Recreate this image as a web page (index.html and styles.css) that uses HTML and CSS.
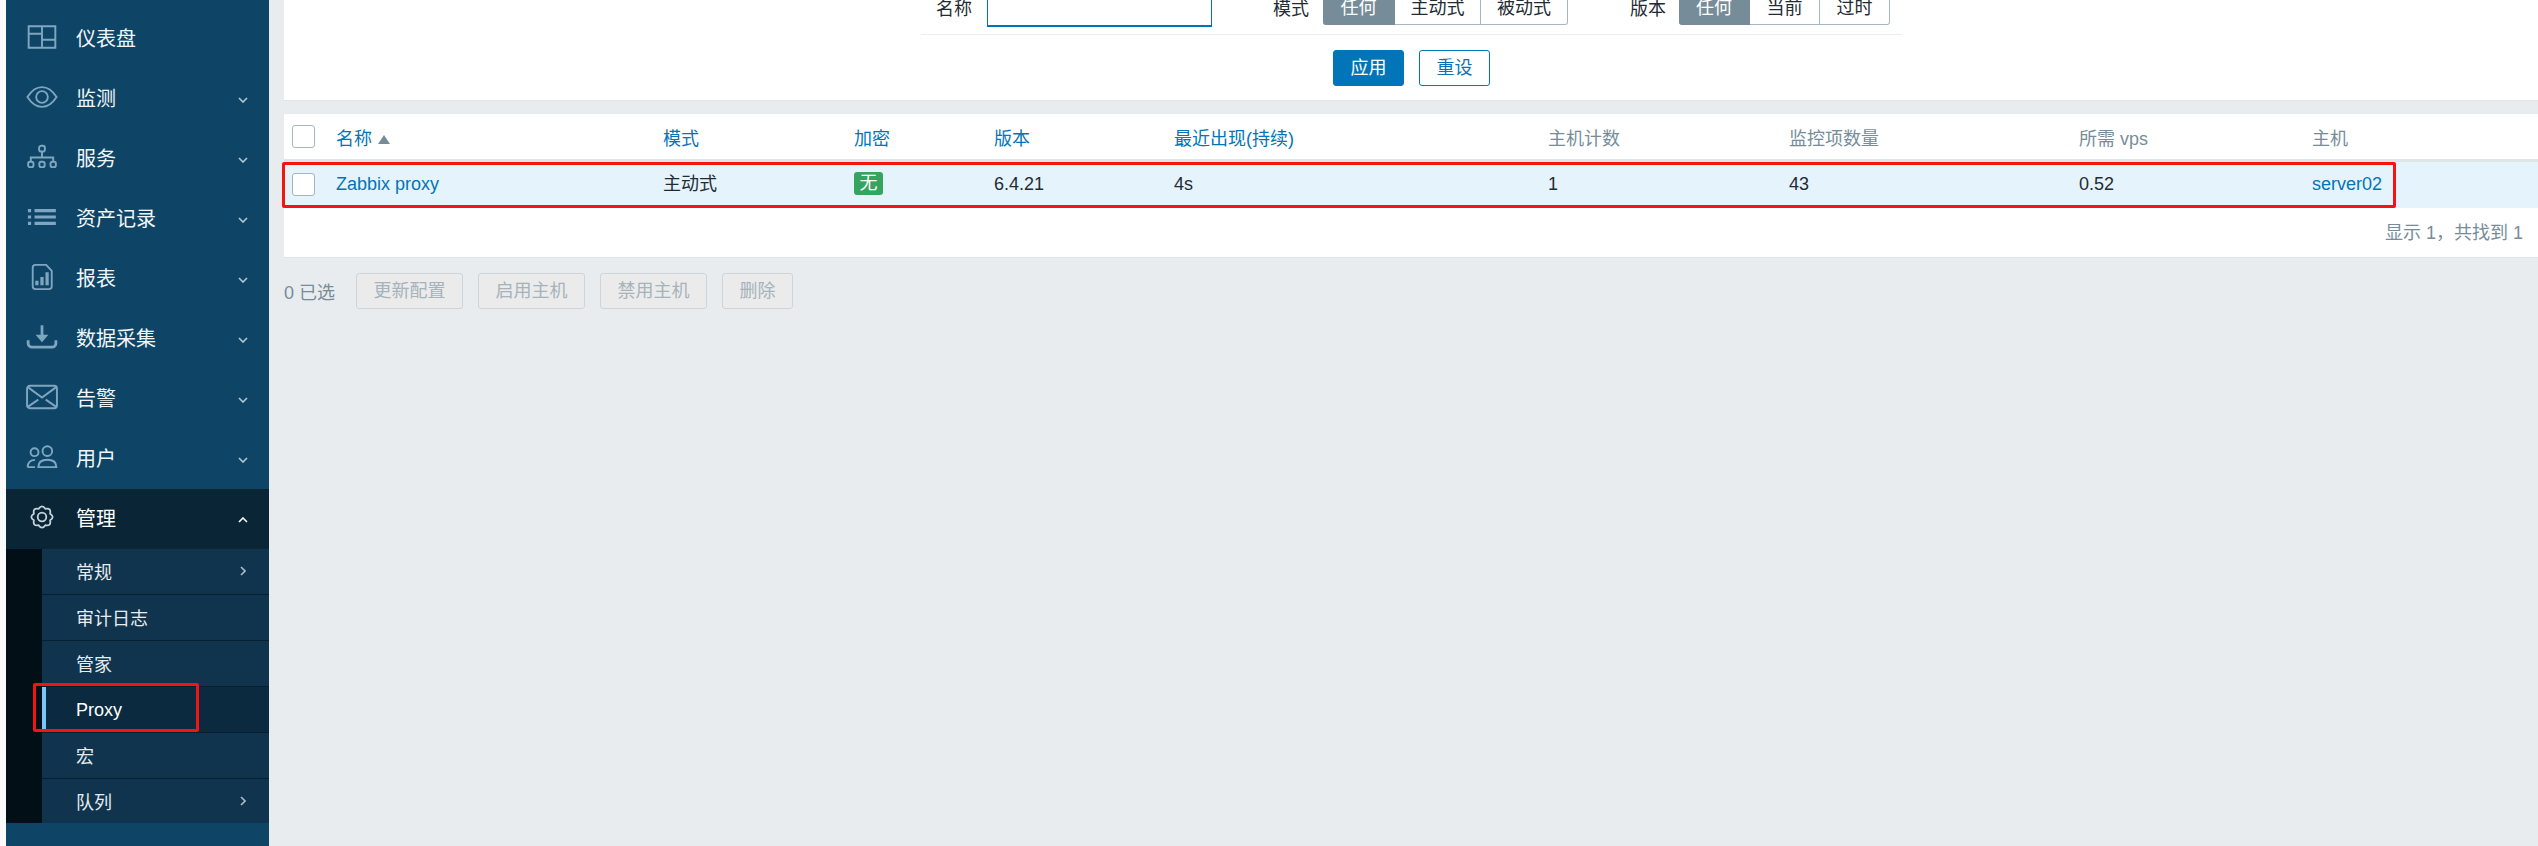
FILE: index.html
```html
<!DOCTYPE html>
<html lang="zh">
<head>
<meta charset="utf-8">
<title>Proxy</title>
<link rel="stylesheet" href="styles.css">
</head>
<body>
<div class="page">
  <nav class="sidebar">
    <ul class="menu">
      <li class="menu-item">
        <svg class="icon" viewBox="0 0 30 24"><path d="M2.500 2h25v20h-25zM2.500 9h12M15 2v20M15 14.500h12.500"/></svg>
        <span class="menu-label">仪表盘</span>
      </li>
      <li class="menu-item">
        <svg class="icon icon-eye" viewBox="0 0 34 24"><path d="M1.500 12C6 5 11 1.500 17 1.500S28 5 32.500 12C28 19 23 22.500 17 22.500S6 19 1.500 12z"/><circle cx="17" cy="12" r="6.200"/></svg>
        <span class="menu-label">监测</span>
        <svg class="chev" viewBox="0 0 10 6"><path d="M1 1l4 4 4-4"/></svg>
      </li>
      <li class="menu-item">
        <svg class="icon" viewBox="0 0 30 24"><rect x="12.300" y="1.500" width="5.400" height="5.400" rx="2"/><path d="M15 7v5.500M4.500 16.500v-4h21v4"/><rect x="2" y="16.500" width="5" height="5" rx="1.800"/><rect x="12.500" y="16.500" width="5" height="5" rx="1.800"/><rect x="23" y="16.500" width="5" height="5" rx="1.800"/></svg>
        <span class="menu-label">服务</span>
        <svg class="chev" viewBox="0 0 10 6"><path d="M1 1l4 4 4-4"/></svg>
      </li>
      <li class="menu-item">
        <svg class="icon thick" viewBox="0 0 30 24"><path d="M1.800 6h3M8 6h20M1.800 12h3M8 12h20M1.800 18h3M8 18h20"/></svg>
        <span class="menu-label">资产记录</span>
        <svg class="chev" viewBox="0 0 10 6"><path d="M1 1l4 4 4-4"/></svg>
      </li>
      <li class="menu-item">
        <svg class="icon icon-doc" viewBox="0 0 30 28"><path d="M5 4a3 3 0 0 1 3-3h11.500L25.500 7.500V24a3 3 0 0 1-3 3H8a3 3 0 0 1-3-3z"/><path class="bar" d="M9.500 23v-5M15 23v-9M20.500 23V9"/></svg>
        <span class="menu-label">报表</span>
        <svg class="chev" viewBox="0 0 10 6"><path d="M1 1l4 4 4-4"/></svg>
      </li>
      <li class="menu-item">
        <svg class="icon" viewBox="0 0 30 24"><path class="thick-line" d="M15 1v10"/><path class="fill" d="M9 10h12l-6 7z"/><path class="thick-line" d="M2 15v3a3.500 3.500 0 0 0 3.500 3.500h19A3.500 3.500 0 0 0 28 18v-3"/></svg>
        <span class="menu-label">数据采集</span>
        <svg class="chev" viewBox="0 0 10 6"><path d="M1 1l4 4 4-4"/></svg>
      </li>
      <li class="menu-item">
        <svg class="icon" viewBox="0 0 30 24"><rect x="1" y="1.500" width="28" height="21" rx="2.500"/><path d="M2 3l13 9.500L28 3M2 21l9.500-6.500M28 21l-9.500-6.500"/></svg>
        <span class="menu-label">告警</span>
        <svg class="chev" viewBox="0 0 10 6"><path d="M1 1l4 4 4-4"/></svg>
      </li>
      <li class="menu-item">
        <svg class="icon" viewBox="0 0 30 24"><circle cx="20" cy="6.500" r="4.500"/><circle cx="8" cy="7.500" r="3.700"/><path d="M11.500 21.500c0-4.500 3.200-7 8.500-7s8.500 2.500 8.500 7zM1.500 21.500c0-4 2.500-6.800 7-6.800M1.500 21.500H8.500"/></svg>
        <span class="menu-label">用户</span>
        <svg class="chev" viewBox="0 0 10 6"><path d="M1 1l4 4 4-4"/></svg>
      </li>
      <li class="menu-item is-open">
        <svg class="icon" viewBox="0 0 30 26"><circle cx="15" cy="13" r="4.300"/><path d="M23.130 16.370Q28.200 13 23.130 9.630 24.330 3.670 18.370 4.870 15 -.2 11.630 4.870 5.670 3.670 6.870 9.630 1.800 13 6.870 16.370 5.670 22.330 11.630 21.130 15 26.200 18.370 21.130 24.330 22.330 23.130 16.370z"/></svg>
        <span class="menu-label">管理</span>
        <svg class="chev" viewBox="0 0 10 6"><path d="M1 5l4-4 4 4"/></svg>
      </li>
    </ul>
    <div class="submenu-wrap">
      <ul class="submenu">
        <li class="sub-item">常规<svg class="chev-right" viewBox="0 0 6 10"><path d="M1 1l4 4-4 4"/></svg></li>
        <li class="sub-item">审计日志</li>
        <li class="sub-item">管家</li>
        <li class="sub-item is-current">Proxy<span class="mark mark-nav"></span></li>
        <li class="sub-item">宏</li>
        <li class="sub-item">队列<svg class="chev-right" viewBox="0 0 6 10"><path d="M1 1l4 4-4 4"/></svg></li>
      </ul>
    </div>
  </nav>

  <main class="content">
    <section class="filter">
      <div class="filter-row">
        <div class="field field-name">
          <span class="field-label">名称</span>
          <span class="input"></span>
        </div>
        <div class="field field-mode">
          <span class="field-label">模式</span>
          <div class="seg">
            <span class="seg-btn seg-on w72">任何</span><span class="seg-btn w86">主动式</span><span class="seg-btn w87">被动式</span>
          </div>
        </div>
        <div class="field field-version">
          <span class="field-label">版本</span>
          <div class="seg">
            <span class="seg-btn seg-on w71">任何</span><span class="seg-btn w70">当前</span><span class="seg-btn w70">过时</span>
          </div>
        </div>
      </div>
      <div class="filter-actions">
        <span class="btn btn-primary">应用</span>
        <span class="btn btn-alt">重设</span>
      </div>
    </section>

    <section class="panel">
      <table class="grid">
        <colgroup>
          <col class="c-check"><col class="c-name"><col class="c-mode"><col class="c-enc"><col class="c-ver"><col class="c-seen"><col class="c-hosts"><col class="c-items"><col class="c-vps"><col>
        </colgroup>
        <thead>
          <tr>
            <th><span class="check"></span></th>
            <th class="sortable">名称<span class="sort-arrow"></span></th>
            <th class="sortable">模式</th>
            <th class="sortable">加密</th>
            <th class="sortable">版本</th>
            <th class="sortable">最近出现(持续)</th>
            <th>主机计数</th>
            <th>监控项数量</th>
            <th>所需 vps</th>
            <th>主机</th>
          </tr>
        </thead>
        <tbody>
          <tr class="row-hl">
            <td class="cell-box cell-check"><span class="check"></span></td>
            <td><span class="link">Zabbix proxy</span></td>
            <td>主动式</td>
            <td class="cell-box"><span class="badge">无</span></td>
            <td>6.4.21</td>
            <td>4s</td>
            <td>1</td>
            <td>43</td>
            <td>0.52</td>
            <td><span class="link">server02</span></td>
          </tr>
        </tbody>
      </table>
      <div class="paging">显示 1，共找到 1</div>
      <span class="mark mark-row"></span>
    </section>

    <div class="actions">
      <span class="selected">0 已选</span>
      <span class="btn-off w107">更新配置</span>
      <span class="btn-off w107">启用主机</span>
      <span class="btn-off w107">禁用主机</span>
      <span class="btn-off w71">删除</span>
    </div>
  </main>
</div>
</body>
</html>
```

FILE: styles.css
```css
* { box-sizing: border-box; }
html, body { margin: 0; padding: 0; height: 100%; }
body {
  background: #fafafa;
  font-family: "Liberation Sans", "Noto Sans CJK SC", sans-serif;
  font-size: 18px;
  color: #1f2c33;
  overflow: hidden;
}
ul { list-style: none; margin: 0; padding: 0; }

.page { display: flex; height: 846px; padding-left: 6px; }

/* sidebar */
.sidebar { width: 263px; flex: none; background: #0e4566; color: #f2f5f7; }
.menu { padding-top: 9px; }
.menu-item {
  position: relative;
  display: flex;
  align-items: center;
  height: 60px;
  padding-left: 70px;
  font-size: 20px;
}
.menu-item.is-open { background: #092536; color: #fff; }
.menu-label { flex: 1; padding-bottom: 4px; }
.icon {
  position: absolute;
  left: 20px;
  top: calc(50% - 2px);
  width: 32px;
  height: 26px;
  transform: translateY(-50%);
  fill: none;
  stroke: #7fa6c0;
  stroke-width: 1.800;
}
.is-open .icon { stroke: #c4d3dc; }
.icon.thick { stroke-width: 3; }
.icon.icon-eye { stroke-width: 2; }
.icon.icon-doc { stroke-width: 2; }
.icon .bar { stroke-width: 3.500; }
.icon .thick-line { stroke-width: 2.600; }
.icon .fill { fill: #7fa6c0; stroke: none; }
.chev {
  width: 10px;
  height: 6px;
  margin: 2px 21px 0 0;
  fill: none;
  stroke: #b5c7d3;
  stroke-width: 1.600;
}
.is-open .chev { stroke: #fff; }

.submenu-wrap { background: #020f17; padding-left: 36px; height: 274px; }
.submenu { background: #10344d; height: 100%; }
.sub-item {
  position: relative;
  display: flex;
  align-items: center;
  justify-content: space-between;
  height: 46px;
  padding: 0 23px 2px 34px;
  border-bottom: 1px solid #05202f;
  color: #e6ecf0;
  font-size: 18px;
}
.sub-item:last-child { border-bottom: 0; height: 44px; padding-bottom: 0; }
.sub-item.is-current {
  background: #0b2a3f;
  color: #fff;
  padding-top: 2px;
  padding-bottom: 0;
  box-shadow: inset 4px 0 0 #7cc5fb;
}
.chev-right { width: 6px; height: 10px; fill: none; stroke: #a9bcc9; stroke-width: 1.600; }

/* red annotation boxes */
.mark { position: absolute; border: 3px solid #f5140f; border-radius: 2px; pointer-events: none; }
.mark-nav { left: -9px; top: -4px; width: 166px; height: 49px; }
.mark-row { left: -2px; top: 48px; width: 2114px; height: 46px; }

/* main */
.content { flex: 1; min-width: 0; background: #e9ecef; padding-left: 15px; }

.filter {
  height: 101px;
  background: #fff;
  border-bottom: 1px solid #dfe4e7;
  overflow: hidden;
}
.filter-row {
  display: flex;
  align-items: flex-end;
  height: 35px;
  margin: 0 636px 0 637px;
  padding-bottom: 9px;
  border-bottom: 1px solid #ebeef0;
}
.field { display: flex; align-items: flex-end; }
.field-label { line-height: 18px; margin-bottom: 7px; white-space: nowrap; }
.field-name { margin-left: 15px; }
.field-name .field-label { margin-right: 15px; }
.input {
  display: block;
  width: 225px;
  height: 40px;
  margin-bottom: -2px;
  background: #fff;
  border: 1px solid #0275b8;
  border-bottom-width: 2px;
}
.field-mode { margin-left: 61px; }
.field-mode .field-label { margin-right: 14px; }
.field-version { margin-left: 62px; }
.field-version .field-label { margin-right: 13px; }
.seg { display: flex; }
.seg-btn {
  display: block;
  height: 36px;
  line-height: 36px;
  text-align: center;
  background: #fff;
  border: 1px solid #a8b6c0;
  border-left-width: 0;
  color: #1f2c33;
  font-size: 18px;
  white-space: nowrap;
}
.seg-btn:last-child { border-radius: 0 0 3px 0; }
.seg-btn.seg-on {
  background: #768d99;
  border-color: #768d99;
  color: #fff;
  border-radius: 0 0 0 3px;
}
.w72 { width: 72px; }
.w86 { width: 86px; }
.w87 { width: 87px; }
.w71 { width: 71px; }
.w70 { width: 70px; }

.filter-actions { display: flex; justify-content: center; gap: 15px; padding-top: 15px; margin-left: 1px; }
.btn {
  width: 71px;
  height: 36px;
  line-height: 34px;
  text-align: center;
  border-radius: 3px;
  border: 1px solid #0275b8;
  font-size: 18px;
}
.btn-primary { background: #0275b8; color: #fff; }
.btn-alt { background: #fff; color: #0275b8; }

.panel {
  position: relative;
  margin-top: 13px;
  height: 144px;
  background: #fff;
  border-bottom: 1px solid #dfe4e7;
}
.grid { width: 100%; border-collapse: separate; border-spacing: 0; table-layout: fixed; }
.c-check { width: 52px; }
.c-name { width: 327px; }
.c-mode { width: 191px; }
.c-enc { width: 140px; }
.c-ver { width: 180px; }
.c-seen { width: 374px; }
.c-hosts { width: 241px; }
.c-items { width: 290px; }
.c-vps { width: 233px; }
.grid th {
  height: 48px;
  padding: 0;
  text-align: left;
  font-weight: normal;
  color: #768d99;
  border-bottom: 3px solid #dfe4e7;
}
.grid th.sortable { color: #0275b8; }
.grid td { height: 46px; padding: 12px 0 0; line-height: 20px; vertical-align: baseline; }
.grid td.cell-box { padding-top: 10px; vertical-align: top; }
.grid td.cell-check { padding-top: 11px; }
.grid th:first-child, .grid td:first-child { padding-left: 8px; }
.row-hl { background: #e5f3fd; }
.check {
  display: block;
  width: 23px;
  height: 23px;
  background: #fff;
  border: 1px solid #a8b6c0;
  border-radius: 3px;
}
.sort-arrow {
  display: inline-block;
  margin-left: 6px;
  vertical-align: 1px;
  border: 6px solid transparent;
  border-top: 0;
  border-bottom: 9px solid #768d99;
}
.link { color: #0275b8; }
.badge {
  display: block;
  width: 29px;
  height: 23px;
  line-height: 22px;
  text-align: center;
  background: #34a55f;
  border-radius: 3px;
  color: #fff;
  font-size: 18px;
}
.paging {
  height: 50px;
  padding: 0 15px 0 0;
  line-height: 50px;
  text-align: right;
  color: #768d99;
}

.actions { display: flex; align-items: center; gap: 15px; margin-top: 15px; height: 36px; }
.selected { width: 57px; color: #768d99; white-space: nowrap; }
.btn-off {
  height: 36px;
  line-height: 34px;
  text-align: center;
  background: #ebebeb;
  border: 1px solid #cdd5da;
  border-radius: 3px;
  color: #a6b3bb;
}
.w107 { width: 107px; }
```
